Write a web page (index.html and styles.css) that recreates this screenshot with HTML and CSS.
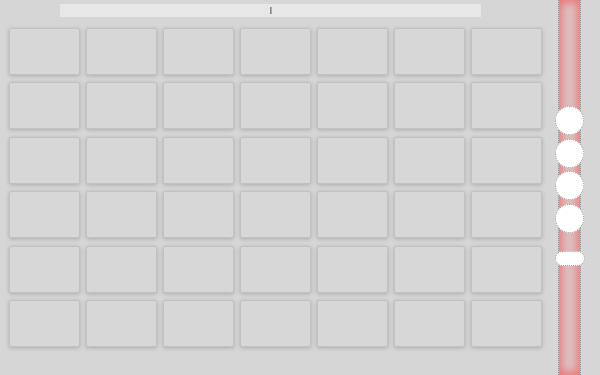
FILE: index.html
```html
<!DOCTYPE html>
<html>
<head>
<meta charset="utf-8">
<link rel="stylesheet" href="styles.css">
</head>
<body>
<div class="app">
  <div class="main">
    <div class="topbar"><span class="caret"></span></div>
    <div class="grid">
      <div class="card"></div><div class="card"></div><div class="card"></div><div class="card"></div><div class="card"></div><div class="card"></div><div class="card"></div>
      <div class="card"></div><div class="card"></div><div class="card"></div><div class="card"></div><div class="card"></div><div class="card"></div><div class="card"></div>
      <div class="card"></div><div class="card"></div><div class="card"></div><div class="card"></div><div class="card"></div><div class="card"></div><div class="card"></div>
      <div class="card"></div><div class="card"></div><div class="card"></div><div class="card"></div><div class="card"></div><div class="card"></div><div class="card"></div>
      <div class="card"></div><div class="card"></div><div class="card"></div><div class="card"></div><div class="card"></div><div class="card"></div><div class="card"></div>
      <div class="card"></div><div class="card"></div><div class="card"></div><div class="card"></div><div class="card"></div><div class="card"></div><div class="card"></div>
    </div>
  </div>
  <div class="sidebar">
    <div class="dot"></div>
    <div class="dot"></div>
    <div class="dot"></div>
    <div class="dot"></div>
    <div class="pill"></div>
  </div>
</div>
</body>
</html>
```
FILE: styles.css
```css
html, body {
  margin: 0;
  padding: 0;
  background: #d6d6d6;
  font-family: "Liberation Sans", Arial, sans-serif;
  overflow: hidden;
}
.app {
  display: flex;
  width: 600px;
  height: 375px;
}
.main {
  width: 550px;
  padding-top: 4px;
  box-sizing: border-box;
}
.topbar {
  margin-left: 60px;
  width: 421px;
  height: 13px;
  background: #e7e7e7;
  display: flex;
  align-items: center;
  justify-content: center;
}
.caret {
  width: 2px;
  height: 7px;
  background: linear-gradient(to right, #777, #bbb);
}
.grid {
  margin-top: 11px;
  margin-left: 9px;
  display: grid;
  grid-template-columns: repeat(7, 71px);
  grid-auto-rows: 47px;
  column-gap: 6px;
  row-gap: 7.4px;
}
.card {
  background: #d7d7d7;
  border: 1px solid #c2c2c2;
  border-radius: 2px;
  box-shadow: 0 1px 4px rgba(0, 0, 0, 0.2);
}
.sidebar {
  margin-left: 8px;
  width: 23px;
  height: 375px;
  box-sizing: border-box;
  border-left: 1px dotted #999;
  border-right: 1px dotted #999;
  background: #dbc2c2;
  box-shadow: inset 0 0 8px 3px rgba(242, 100, 100, 0.8);
  display: flex;
  flex-direction: column;
  align-items: center;
  padding-top: 106px;
}
.dot {
  flex: none;
  width: 29px;
  height: 29px;
  box-sizing: border-box;
  border-radius: 50%;
  background: #ffffff;
  border: 1px dotted #999;
  margin-bottom: 3.5px;
}
.pill {
  flex: none;
  width: 30px;
  height: 15px;
  box-sizing: border-box;
  border-radius: 8px;
  background: #ffffff;
  border: 1px dotted #999;
  margin-top: 15px;
}
```
